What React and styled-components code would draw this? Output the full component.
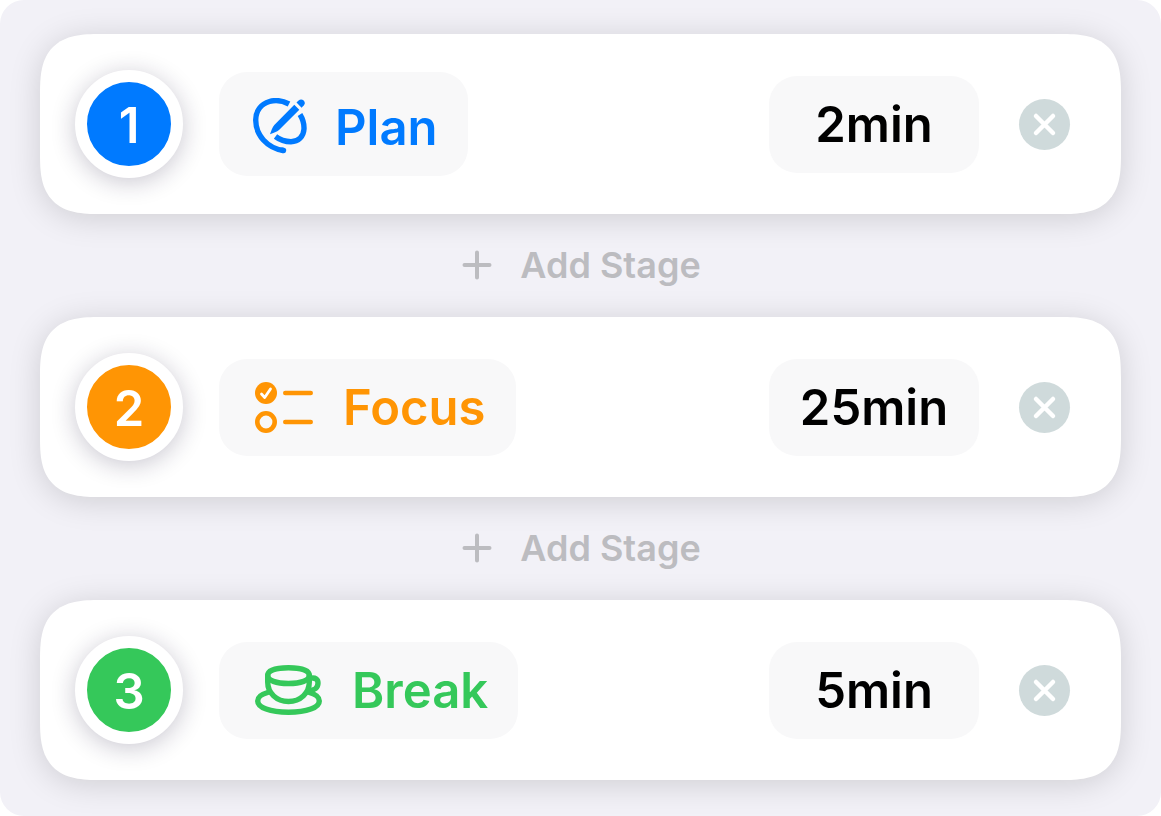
import React, { useState } from 'react'
import styled, { createGlobalStyle } from 'styled-components'

const GlobalStyle = createGlobalStyle`
  body {
    margin: 0;
    background: #ffffff;
    font-family: Inter, "Liberation Sans", sans-serif;
  }
  * {
    box-sizing: border-box;
  }
`;
const Page = styled.main`
  display: flex;
  flex-direction: column;
  min-height: 100vh;
  padding: 34px 40px 36px 40px;
  border-radius: 24px;
  background: #f2f1f7;
`;
const Card = styled.section`
  display: flex;
  align-items: center;
  height: 180px;
  padding: 0 51px 0 35px;
  border-radius: 48px;
  background: #ffffff;
  box-shadow: 0 4px 32px rgba(0, 0, 10, 0.15);

  @supports (corner-shape: superellipse(1.5)) {
    border-radius: 60px;
    corner-shape: superellipse(1.5);
  }
`;
const Badge = styled.div`
  display: flex;
  align-items: center;
  justify-content: center;
  width: 108px;
  height: 108px;
  margin-right: 36px;
  padding-top: 2px;
  border: 12px solid #ffffff;
  border-radius: 50%;
  background: ${props => props.$color};
  box-shadow: 0 4px 24px rgba(30, 20, 60, 0.24);
  color: #ffffff;
  font-size: 49px;
  font-weight: 600;
`;
const Chip = styled.button`
  display: flex;
  align-items: center;
  justify-content: center;
  gap: ${props => props.$tall ? '28px' : '30px'};
  min-height: 97px;
  padding: ${props => props.$tall ? '26px 30px 18px 34px' : '2px 30px 0 36px'};
  border: none;
  border-radius: 28px;
  background: #f8f8f9;
  color: ${props => props.$color};
  font-family: inherit;
  font-size: 49px;
  font-weight: 600;
  line-height: 56px;
  cursor: pointer;
`;
const TimeButton = styled(Chip)`
  width: 210px;
  padding: 2px 0 0;
  margin-left: auto;
  margin-right: 40px;
  color: #000000;
`;
const RemoveButton = styled.button`
  display: flex;
  align-items: center;
  justify-content: center;
  width: 51px;
  height: 51px;
  padding: 0;
  border: none;
  border-radius: 50%;
  background: #cfdadb;
  cursor: pointer;
`;
const AddButton = styled.button`
  display: flex;
  align-items: center;
  align-self: center;
  gap: 28px;
  height: 103px;
  padding: 0 0 2px 2px;
  border: none;
  background: none;
  color: #bcbcc0;
  font-family: inherit;
  font-size: 36px;
  font-weight: 600;
  cursor: pointer;
`;

const PlanIcon = () => (
  <svg width="54" height="60" viewBox="0 0 54 60" fill="none" stroke="currentColor" strokeWidth="5.400" strokeLinecap="round" aria-hidden="true">
    <path d="M36 6C29 2.300 22.500 1.800 16.500 3.500C8 5.800 2.700 13 2.700 22C2.700 37 14 50 30.500 52.500" strokeLinecap="butt" />
    <path d="M29.500 52.300L30.500 52.500" />
    <path d="M47 16.500C49.800 21 51.200 26 51 31C50.600 38.500 45.500 43.700 38 43.700C32 43.700 27 42 22.500 38.500" strokeLinecap="butt" />
    <path d="M41.300 6.800L46.300 11.800L26 32C24 33.800 20.500 35 17 36.300C18.200 32.800 19.300 29.200 21.300 27Z" fill="currentColor" stroke="none" />
    <path d="M43.500 4.600L45.600 2.500C48.800-.6 54 4 50.900 7.300L48.600 9.700Z" fill="currentColor" stroke="none" />
  </svg>
)
const FocusIcon = () => (
  <svg width="58" height="53" viewBox="0 0 58 53" fill="none" stroke="currentColor" strokeWidth="4.600" strokeLinecap="round" strokeLinejoin="round" aria-hidden="true">
    <circle cx="11" cy="11" r="11" fill="currentColor" stroke="none" />
    <path d="M6.500 12L9.700 15.500L15.500 7" stroke="#ffffff" strokeWidth="2.800" />
    <circle cx="11" cy="40" r="8.700" />
    <path d="M30.300 11H55.700M30.300 40H55.700" />
  </svg>
)
const BreakIcon = () => (
  <svg width="67" height="52" viewBox="0 0 67 52" fill="none" stroke="currentColor" strokeWidth="5.400" strokeLinecap="round" strokeLinejoin="round" aria-hidden="true">
    <path d="M12.700 10.500C12.700 5.500 21 2.700 33.500 2.700S54.300 5.500 54.300 10.500S46 18.500 33.500 18.500S12.700 15.500 12.700 10.500Z" />
    <path d="M12.700 10.500V17C12.700 28 21.500 36.500 33.500 36.500S54.300 28 54.300 17V10.500" />
    <path d="M56 13.200C60.500 12.500 63 14.500 63 18C63 22.500 59.500 25.600 54 25.600" />
    <path d="M12.700 27.500C6 29.300 2.700 32 2.700 36C2.700 42.500 15 47.300 33.500 47.300S64.300 42.500 64.300 36C64.300 32 61 29.300 54.300 27.500" />
  </svg>
)
const CloseIcon = () => (
  <svg width="25" height="25" viewBox="0 0 25 25" stroke="#ffffff" strokeWidth="4.500" strokeLinecap="round" aria-hidden="true">
    <path d="M4 4L21 21M21 4L4 21" />
  </svg>
)
const PlusIcon = () => (
  <svg width="30" height="30" viewBox="0 0 30 30" stroke="currentColor" strokeWidth="4" strokeLinecap="round" aria-hidden="true">
    <path d="M15 2.500V27.500M2.500 15H27.500" />
  </svg>
)

const initialStages = [
  { id: 1, name: 'Plan', time: '2min', color: '#007aff', Icon: PlanIcon, tall: true },
  { id: 2, name: 'Focus', time: '25min', color: '#ff9504', Icon: FocusIcon },
  { id: 3, name: 'Break', time: '5min', color: '#35c85a', Icon: BreakIcon },
]

function App() {
  const [stages, updateStages] = useState(initialStages);
  const removeStage = (id) => updateStages(stages.filter(stage => stage.id !== id));
  const addStage = (index) => {
    const stage = { ...stages[index], id: Date.now() }
    updateStages([...stages.slice(0, index + 1), stage, ...stages.slice(index + 1)])
  };
  return <>
    <GlobalStyle />
    <Page>
      {stages.map(({ id, name, time, color, Icon, tall }, index) => (
        <React.Fragment key={id}>
          {index > 0 && (
            <AddButton type="button" onClick={() => addStage(index - 1)}>
              <PlusIcon />Add Stage
            </AddButton>
          )}
          <Card>
            <Badge $color={color}>{index + 1}</Badge>
            <Chip type="button" $color={color} $tall={tall}>
              <Icon />{name}
            </Chip>
            <TimeButton type="button">{time}</TimeButton>
            <RemoveButton type="button" aria-label={`Remove ${name}`} onClick={() => removeStage(id)}>
              <CloseIcon />
            </RemoveButton>
          </Card>
        </React.Fragment>
      ))}
    </Page>
  </>
}

export default App;
